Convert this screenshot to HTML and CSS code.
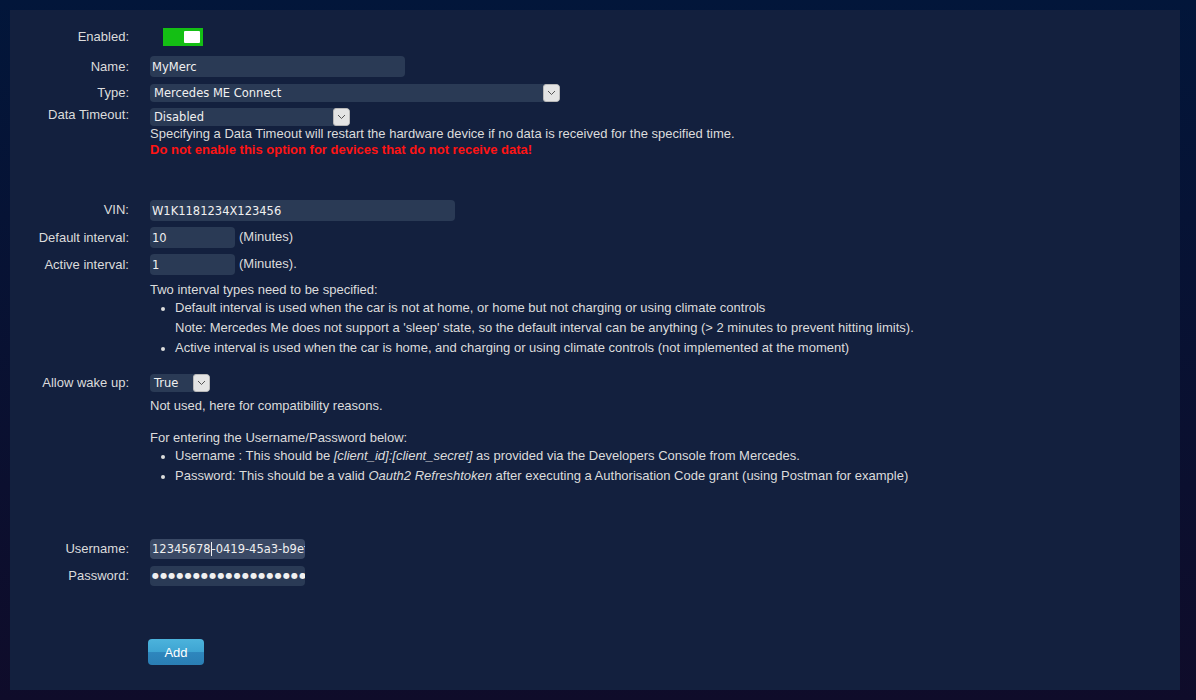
FILE: index.html
```html
<!DOCTYPE html>
<html lang="en">
<head>
  <meta charset="UTF-8">
  <title>Add Hardware</title>
  <link rel="stylesheet" href="styles.css">
</head>
<body>
  <div class="panel">
    <div class="row row-enabled">
      <label>Enabled:</label>
      <div class="field"><span class="toggle"><span class="knob"></span></span></div>
    </div>
    <div class="row row-name">
      <label>Name:</label>
      <div class="field"><div class="input w-name">MyMerc</div></div>
    </div>
    <div class="row row-type">
      <label>Type:</label>
      <div class="field">
        <div class="select w-type"><span class="value">Mercedes ME Connect</span><span class="arrow"><svg width="9" height="6" viewBox="0 0 9 6"><path d="M1 1l3.5 3.5L8 1" fill="none" stroke="#555" stroke-width="1"/></svg></span></div>
      </div>
    </div>
    <div class="row row-timeout">
      <label>Data Timeout:</label>
      <div class="field">
        <div class="select w-timeout"><span class="value">Disabled</span><span class="arrow"><svg width="9" height="6" viewBox="0 0 9 6"><path d="M1 1l3.5 3.5L8 1" fill="none" stroke="#555" stroke-width="1"/></svg></span></div>
        <div class="note">Specifying a Data Timeout will restart the hardware device if no data is received for the specified time.</div>
        <div class="warn">Do not enable this option for devices that do not receive data!</div>
      </div>
    </div>

    <div class="row row-vin">
      <label>VIN:</label>
      <div class="field"><div class="input w-vin">W1K1181234X123456</div></div>
    </div>
    <div class="row row-int">
      <label>Default interval:</label>
      <div class="field inline"><div class="input w-int">10</div><span class="unit">(Minutes)</span></div>
    </div>
    <div class="row row-int">
      <label>Active interval:</label>
      <div class="field inline"><div class="input w-int">1</div><span class="unit">(Minutes).</span></div>
    </div>
    <div class="row row-help">
      <label></label>
      <div class="field help">
        <div class="lead">Two interval types need to be specified:</div>
        <ul>
          <li>Default interval is used when the car is not at home, or home but not charging or using climate controls<br>Note: Mercedes Me does not support a 'sleep' state, so the default interval can be anything (&gt; 2 minutes to prevent hitting limits).</li>
          <li>Active interval is used when the car is home, and charging or using climate controls (not implemented at the moment)</li>
        </ul>
      </div>
    </div>

    <div class="row row-wake">
      <label>Allow wake up:</label>
      <div class="field">
        <div class="select w-wake"><span class="value">True</span><span class="arrow"><svg width="9" height="6" viewBox="0 0 9 6"><path d="M1 1l3.5 3.5L8 1" fill="none" stroke="#555" stroke-width="1"/></svg></span></div>
        <div class="note note-wake">Not used, here for compatibility reasons.</div>
        <div class="help help-cred">
          <div class="lead">For entering the Username/Password below:</div>
          <ul>
            <li>Username : This should be <i>[client_id]:[client_secret]</i> as provided via the Developers Console from Mercedes.</li>
            <li>Password: This should be a valid <i>Oauth2 Refreshtoken</i> after executing a Authorisation Code grant (using Postman for example)</li>
          </ul>
        </div>
      </div>
    </div>

    <div class="row row-user">
      <label>Username:</label>
      <div class="field"><div class="input w-cred focus">12345678<span class="caret"></span>-0419-45a3-b9ef</div></div>
    </div>
    <div class="row row-pass">
      <label>Password:</label>
      <div class="field"><div class="input w-cred dots">●●●●●●●●●●●●●●●●●●●●●●</div></div>
    </div>

    <div class="row row-add">
      <label></label>
      <div class="field"><button class="btn">Add</button></div>
    </div>
  </div>
</body>
</html>
```

FILE: styles.css
```css
html, body {
  margin: 0;
  height: 100%;
}
body {
  background: linear-gradient(#02163a, #0f0c2a);
  font-family: "Liberation Sans", Arial, sans-serif;
  font-size: 13px;
  color: #dcdcdc;
  padding: 10px 16px 10px 10px;
  box-sizing: border-box;
}
.panel {
  background-color: #13203e;
  height: 680px;
  box-sizing: border-box;
  padding-top: 13px;
}
.row {
  display: flex;
}
.row label {
  width: 119px;
  padding-right: 21px;
  text-align: right;
  flex-shrink: 0;
}
.field {
  flex: 1;
}
.inline {
  display: flex;
  align-items: flex-start;
}
.unit {
  margin-left: 4px;
  margin-top: -1px;
}

.input, .select {
  background-color: #2a3a55;
  border-radius: 4px;
  color: #f0f0f0;
  font-family: "DejaVu Sans", Verdana, sans-serif;
  font-size: 11.5px;
  height: 21px;
  line-height: 22px;
  padding-left: 2px;
  box-sizing: border-box;
  overflow: hidden;
  white-space: nowrap;
}
.select {
  display: flex;
  height: 18px;
  line-height: 19px;
  padding-left: 4px;
}
.select .value {
  flex: 1;
}
.select .arrow {
  width: 17px;
  height: 18px;
  background-color: #e4e4e4;
  border: 1px solid #b8b8b8;
  border-radius: 3px;
  box-sizing: border-box;
  display: flex;
  align-items: center;
  justify-content: center;
}
.w-name { width: 255px; }
.w-type { width: 410px; }
.w-timeout { width: 200px; }
.w-vin { width: 305px; }
.w-int { width: 85px; }
.w-wake { width: 60px; }
.w-cred { width: 155px; }
.focus { background-color: #3a4965; }
.caret {
  display: inline-block;
  width: 1px;
  height: 14px;
  background-color: #f0f0f0;
  vertical-align: -3px;
}
.dots {
  font-size: 8px;
  letter-spacing: 1.2px;
}

.toggle {
  display: inline-block;
  width: 40px;
  height: 18px;
  background-color: #14bf14;
  position: relative;
  margin-left: 13px;
  vertical-align: middle;
}
.knob {
  position: absolute;
  right: 3px;
  top: 3px;
  width: 16px;
  height: 12px;
  background-color: #fff;
  border-radius: 1px;
}

.row-enabled { height: 28px; align-items: center; line-height: 18px; }
.row-name { height: 28px; line-height: 22px; margin-top: 5px; }
.row-type { height: 24px; line-height: 18px; }
.row-timeout label { line-height: 14px; }
.note { line-height: 16px; }
.warn {
  color: #ff1414;
  font-weight: bold;
  line-height: 16px;
}
.row-vin { margin-top: 42px; height: 27px; line-height: 20px; }
.row-int { height: 27px; line-height: 22px; }
.help {
  line-height: 20px;
}
.help .lead {
  line-height: 16px;
}
.help ul {
  margin: 0;
  padding-left: 25px;
}
.help li { list-style: disc; }
.help li::marker { font-size: 12px; }
.row-help { margin-top: 1px; }
.row-wake { margin-top: 16px; }
.row-wake label { line-height: 18px; }
.note-wake { margin-top: 5px; line-height: 18px; }
.help-cred { margin-top: 15px; }
.row-user { margin-top: 53px; height: 27px; line-height: 20px; }
.row-user .input { height: 20px; line-height: 21px; }
.row-pass { height: 20px; line-height: 20px; }
.row-pass .input { height: 20px; line-height: 20px; }
.row-add { margin-top: 53px; }
.btn {
  margin-left: -2px;
  width: 56px;
  height: 26px;
  border: none;
  border-radius: 4px;
  background: linear-gradient(#4cb3dc, #3ea4d2 50%, #2e86bd 52%, #2a7eb4);
  color: #fff;
  font-family: "Liberation Sans", Arial, sans-serif;
  font-size: 13px;
  cursor: pointer;
}
```
